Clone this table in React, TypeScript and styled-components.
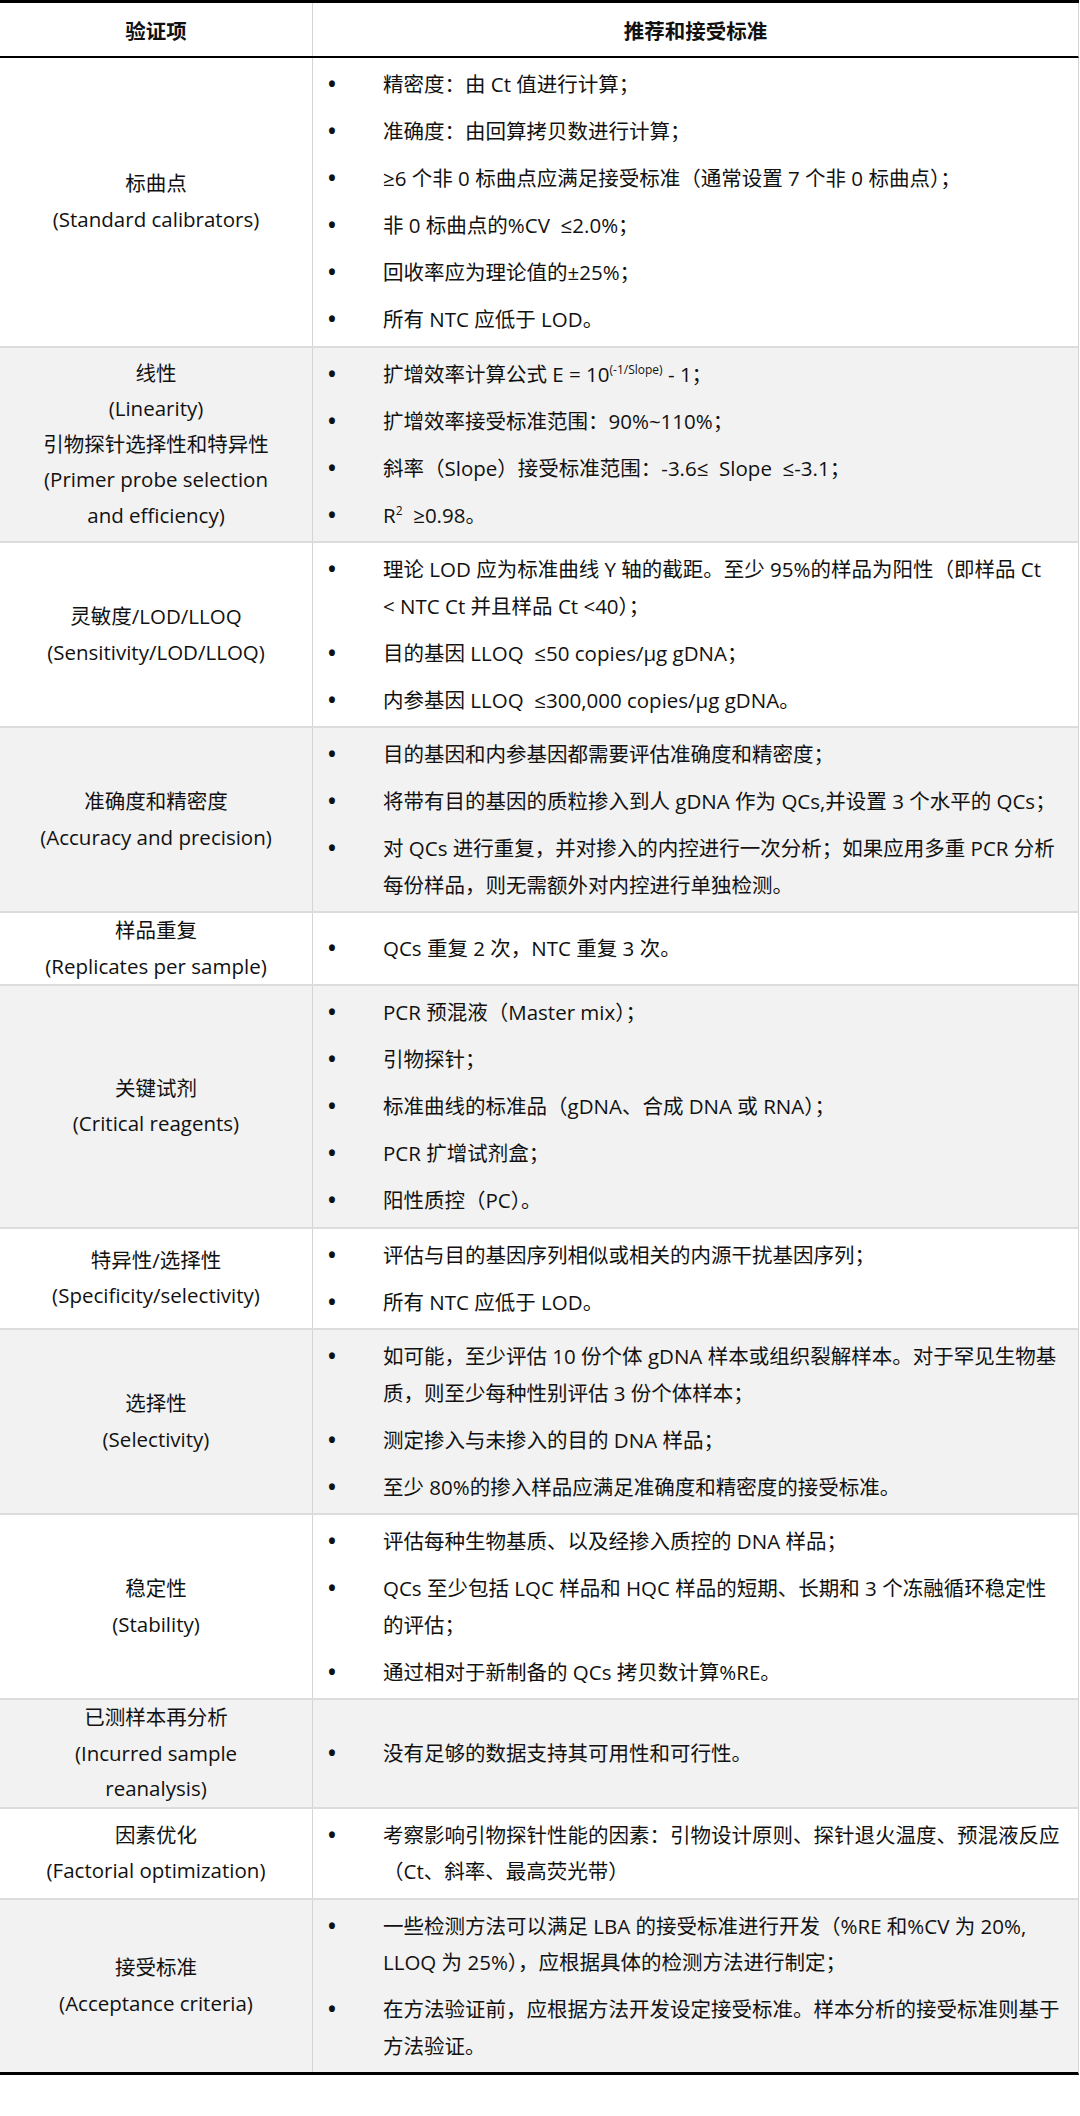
import * as React from 'react'
import styled, { createGlobalStyle } from 'styled-components'

const GlobalStyle = createGlobalStyle`
	html, body {
		margin: 0;
		padding: 0;
		background: #ffffff;
	}
	body {
		font-family: 'Open Sans', 'Noto Sans CJK SC', sans-serif;
		color: #111111;
	}
`

type Line = React.ReactNode

interface Entry {
	title: Line[]
	items: Line[][]
}

const Sup = styled.span`
	font-size: 12px;
	line-height: 0;
	position: relative;
	top: -8px;
`

const rows: Entry[] = [
	{
		title: ['标曲点', '(Standard calibrators)'],
		items: [
			['精密度：由 Ct 值进行计算；'],
			['准确度：由回算拷贝数进行计算；'],
			['≥6 个非 0 标曲点应满足接受标准（通常设置 7 个非 0 标曲点）；'],
			['非 0 标曲点的%CV  ≤2.0%；'],
			['回收率应为理论值的±25%；'],
			['所有 NTC 应低于 LOD。'],
		],
	},
	{
		title: ['线性', '(Linearity)', '引物探针选择性和特异性', '(Primer probe selection', 'and efficiency)'],
		items: [
			[
				<>
					扩增效率计算公式 E = 10<Sup>(-1/Slope)</Sup> - 1；
				</>,
			],
			['扩增效率接受标准范围：90%~110%；'],
			['斜率（Slope）接受标准范围：-3.6≤  Slope  ≤-3.1；'],
			[
				<>
					R<Sup>2</Sup>{'  ≥0.98。'}
				</>,
			],
		],
	},
	{
		title: ['灵敏度/LOD/LLOQ', '(Sensitivity/LOD/LLOQ)'],
		items: [
			['理论 LOD 应为标准曲线 Y 轴的截距。至少 95%的样品为阳性（即样品 Ct', '< NTC Ct 并且样品 Ct <40）；'],
			['目的基因 LLOQ  ≤50 copies/μg gDNA；'],
			['内参基因 LLOQ  ≤300,000 copies/μg gDNA。'],
		],
	},
	{
		title: ['准确度和精密度', '(Accuracy and precision)'],
		items: [
			['目的基因和内参基因都需要评估准确度和精密度；'],
			['将带有目的基因的质粒掺入到人 gDNA 作为 QCs,并设置 3 个水平的 QCs；'],
			['对 QCs 进行重复，并对掺入的内控进行一次分析；如果应用多重 PCR 分析', '每份样品，则无需额外对内控进行单独检测。'],
		],
	},
	{
		title: ['样品重复', '(Replicates per sample)'],
		items: [['QCs 重复 2 次，NTC 重复 3 次。']],
	},
	{
		title: ['关键试剂', '(Critical reagents)'],
		items: [
			['PCR 预混液（Master mix）；'],
			['引物探针；'],
			['标准曲线的标准品（gDNA、合成 DNA 或 RNA）；'],
			['PCR 扩增试剂盒；'],
			['阳性质控（PC）。'],
		],
	},
	{
		title: ['特异性/选择性', '(Specificity/selectivity)'],
		items: [['评估与目的基因序列相似或相关的内源干扰基因序列；'], ['所有 NTC 应低于 LOD。']],
	},
	{
		title: ['选择性', '(Selectivity)'],
		items: [
			['如可能，至少评估 10 份个体 gDNA 样本或组织裂解样本。对于罕见生物基', '质，则至少每种性别评估 3 份个体样本；'],
			['测定掺入与未掺入的目的 DNA 样品；'],
			['至少 80%的掺入样品应满足准确度和精密度的接受标准。'],
		],
	},
	{
		title: ['稳定性', '(Stability)'],
		items: [
			['评估每种生物基质、以及经掺入质控的 DNA 样品；'],
			['QCs 至少包括 LQC 样品和 HQC 样品的短期、长期和 3 个冻融循环稳定性', '的评估；'],
			['通过相对于新制备的 QCs 拷贝数计算%RE。'],
		],
	},
	{
		title: ['已测样本再分析', '(Incurred sample', 'reanalysis)'],
		items: [['没有足够的数据支持其可用性和可行性。']],
	},
	{
		title: ['因素优化', '(Factorial optimization)'],
		items: [['考察影响引物探针性能的因素：引物设计原则、探针退火温度、预混液反应', '（Ct、斜率、最高荧光带）']],
	},
	{
		title: ['接受标准', '(Acceptance criteria)'],
		items: [
			['一些检测方法可以满足 LBA 的接受标准进行开发（%RE 和%CV 为 20%,', 'LLOQ 为 25%），应根据具体的检测方法进行制定；'],
			['在方法验证前，应根据方法开发设定接受标准。样本分析的接受标准则基于', '方法验证。'],
		],
	},
]

export default function App() {
	return (
		<>
			<GlobalStyle />
			<Table>
				<HeaderRow>
					<HeaderCell>验证项</HeaderCell>
					<HeaderCell>推荐和接受标准</HeaderCell>
				</HeaderRow>
				{rows.map((row, index) => (
					<Row key={index} $shaded={index % 2 === 1} $last={index === rows.length - 1}>
						<TitleCell>
							{row.title.map((line, i) => (
								<TitleLine key={i}>{line}</TitleLine>
							))}
						</TitleCell>
						<ItemsCell>
							<List>
								{row.items.map((lines, i) => (
									<Item key={i}>
										<Bullet>•</Bullet>
										<ItemText>
											{lines.map((line, j) => (
												<ItemLine key={j}>{line}</ItemLine>
											))}
										</ItemText>
									</Item>
								))}
							</List>
						</ItemsCell>
					</Row>
				))}
			</Table>
		</>
	)
}

const Table = styled.div`
	width: 1079px;
	border-top: 3px solid #000000;
	font-size: 20.5px;
`

const HeaderRow = styled.div`
	display: grid;
	grid-template-columns: 313px 1fr;
	height: 53px;
	border-bottom: 2px solid #000000;
	border-right: 1px solid #d4d4d4;
`

const HeaderCell = styled.div`
	display: flex;
	align-items: center;
	justify-content: center;
	font-weight: 700;
	font-size: 20.5px;
	padding-top: 1px;

	&:first-child {
		border-right: 1px solid #d4d4d4;
	}
`

const Row = styled.div<{ $shaded: boolean; $last: boolean }>`
	display: grid;
	grid-template-columns: 313px 1fr;
	background: ${p => (p.$shaded ? '#f2f2f2' : '#ffffff')};
	border-right: 1px solid #d4d4d4;
	border-bottom: ${p => (p.$last ? '3px solid #000000' : '2px solid #dcdcdc')};
`

const TitleCell = styled.div`
	display: flex;
	flex-direction: column;
	justify-content: center;
	align-items: center;
	text-align: center;
	border-right: 1px solid #d4d4d4;
	line-height: 35.5px;
`

const TitleLine = styled.div`
	white-space: nowrap;
`

const ItemsCell = styled.div`
	display: flex;
	align-items: center;
	padding: 8px 8px 8px 15px;
`

const List = styled.ul`
	list-style: none;
	margin: 0;
	padding: 0;
	width: 100%;
	display: flex;
	flex-direction: column;
	gap: 10.5px;
`

const Item = styled.li`
	display: flex;
	line-height: 36.5px;
`

const Bullet = styled.span`
	flex: 0 0 55px;
	font-size: 21px;
	font-weight: 700;
`

const ItemText = styled.div`
	flex: 1;
	min-width: 0;
`

const ItemLine = styled.div`
	white-space: pre;
	height: 36.5px;
`
